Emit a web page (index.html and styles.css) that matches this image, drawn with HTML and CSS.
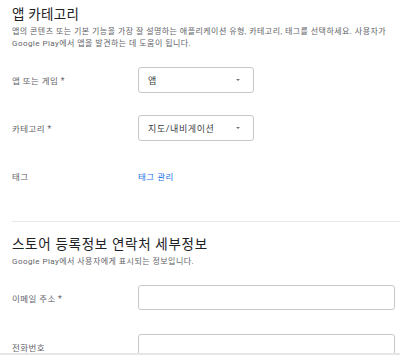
FILE: index.html
```html
<!DOCTYPE html>
<html lang="ko">
<head>
<meta charset="utf-8">
<link rel="stylesheet" href="styles.css">
</head>
<body>
<div class="page">
  <section class="sec">
    <h1 class="title">앱 카테고리</h1>
    <p class="desc">앱의 콘텐츠 또는 기본 기능을 가장 잘 설명하는 애플리케이션 유형, 카테고리, 태그를 선택하세요. 사용자가 Google Play에서 앱을 발견하는 데 도움이 됩니다.</p>
    <div class="rows">
      <div class="row">
        <div class="label">앱 또는 게임 *</div>
        <div class="select"><span>앱</span><span class="arrow"></span></div>
      </div>
      <div class="row">
        <div class="label">카테고리 *</div>
        <div class="select"><span>지도/내비게이션</span><span class="arrow"></span></div>
      </div>
      <div class="row">
        <div class="label">태그</div>
        <a class="link">태그 관리</a>
      </div>
    </div>
  </section>
  <hr class="divider">
  <section class="sec">
    <h2 class="title title2">스토어 등록정보 연락처 세부정보</h2>
    <p class="desc">Google Play에서 사용자에게 표시되는 정보입니다.</p>
    <div class="rows rows2">
      <div class="row row-in">
        <div class="label">이메일 주소 *</div>
        <div class="input"></div>
      </div>
      <div class="row row-in">
        <div class="label">전화번호</div>
        <div class="input"></div>
      </div>
    </div>
  </section>
</div>
<div class="bottombar"></div>
</body>
</html>
```
FILE: styles.css
```css
html, body {
  margin: 0;
  padding: 0;
  background: #fff;
  font-family: "Roboto", "Noto Sans CJK KR", sans-serif;
  overflow: hidden;
}
.page {
  padding-left: 12px;
}
.sec {
  padding-right: 5px;
}
.title {
  margin: 0;
  padding-top: 5px;
  font-size: 13.5px;
  line-height: 18px;
  font-weight: 400;
  color: #202124;
  letter-spacing: 0.3px;
}
.title2 {
  padding-top: 13px;
  letter-spacing: 0.7px;
}
.desc {
  margin: 3px 0 0 0;
  font-size: 8px;
  line-height: 12px;
  letter-spacing: 0.45px;
  word-break: keep-all;
  color: #5f6368;
}
.rows {
  display: flex;
  flex-direction: column;
  gap: 22px;
  margin-top: 17px;
}
.rows2 {
  gap: 24px;
}
.row {
  display: grid;
  grid-template-columns: 126px 1fr;
  align-items: center;
  height: 26px;
}
.row-in {
  height: 25px;
}
.label {
  font-size: 8.5px;
  letter-spacing: 0.4px;
  color: #5f6368;
}
.select {
  box-sizing: border-box;
  width: 116px;
  height: 26px;
  border: 1px solid #c8c8c8;
  border-radius: 3px;
  display: flex;
  align-items: center;
  justify-content: space-between;
  padding: 0 13px 0 9px;
  font-size: 9px;
  letter-spacing: 0.6px;
  color: #3c4043;
}
.arrow {
  width: 0;
  height: 0;
  border-left: 2.5px solid transparent;
  border-right: 2.5px solid transparent;
  border-top: 2.5px solid #757575;
}
.link {
  font-size: 8.5px;
  letter-spacing: 0.5px;
  color: #1a73e8;
}
.input {
  box-sizing: border-box;
  height: 25px;
  border: 1px solid #c8c8c8;
  border-radius: 3px;
}
.divider {
  border: 0;
  height: 1px;
  background: #e8e8e8;
  margin: 32px 0 0 0;
}
.bottombar {
  position: fixed;
  left: 0;
  right: 0;
  bottom: 0;
  height: 2px;
  background: #e6e6e6;
}
```
